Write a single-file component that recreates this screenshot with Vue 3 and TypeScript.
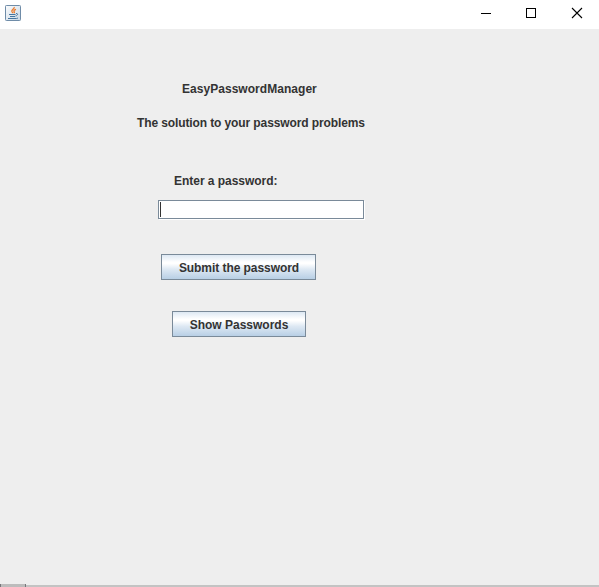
<script setup lang="ts">
import { ref } from 'vue'

const password = ref('')
</script>

<template>
  <main class="window">
    <header class="titlebar">
      <svg class="java" width="16" height="16" viewBox="0 0 16 16">
        <defs>
          <linearGradient id="tile" x1="0" y1="0" x2="1" y2="1">
            <stop offset="0" stop-color="#fbfcfd" />
            <stop offset="1" stop-color="#c9d7e4" />
          </linearGradient>
        </defs>
        <rect x=".5" y=".5" width="15" height="15" rx=".8" fill="url(#tile)" stroke="#6f8ca8" />
        <path d="M9.2 2c.6 2-3.2 2.6-2.3 4.6.3.6.9.9.9 1.6M11 4.4c-1.8.6-2.6 1.4-1.8 2.3.4.5.3.9-.2 1.4" fill="none" stroke="#ea7a2c" stroke-width="1.3" />
        <path d="M4 9.5h6.5M5 11.5h5M3 13.5h8.5l1.5-.5M11 8.5c2.5-.3 1.9 2-.5 2.6" fill="none" stroke="#46759f" stroke-width="1" />
      </svg>
      <div class="controls">
        <svg width="46" height="29" viewBox="0 0 46 29" shape-rendering="crispEdges"><path d="M18 13.5h10" stroke="#000" /></svg>
        <svg width="45" height="29" viewBox="0 0 45 29" shape-rendering="crispEdges"><rect x="17.5" y="8.5" width="9" height="9" fill="none" stroke="#000" /></svg>
        <svg width="46" height="29" viewBox="0 0 46 29"><path d="M18 8l10 10M28 8l-10 10" stroke="#000" stroke-width="1.1" /></svg>
      </div>
    </header>
    <section class="content">
      <h1 class="label name">EasyPasswordManager</h1>
      <p class="label tagline">The solution to your password problems</p>
      <label class="label prompt" for="password">Enter a password:</label>
      <div class="field">
        <span class="caret"></span>
        <input id="password" v-model="password" type="text" />
      </div>
      <button class="submit"><span>Submit the password</span></button>
      <button class="show"><span>Show Passwords</span></button>
    </section>
    <footer class="edge"><span class="tab"></span><span class="rest"></span></footer>
  </main>
</template>

<style>
body {
  overflow: hidden;
}
</style>

<style scoped>
.window {
  display: flex;
  flex-direction: column;
  width: 599px;
  height: 587px;
  background: #eee;
  color: #333;
  font: bold 12px/16px "Liberation Sans", Arial, sans-serif;
}
.titlebar {
  display: flex;
  justify-content: space-between;
  height: 29px;
  padding-left: 5px;
  background: #fff;
}
.java {
  margin-top: 5px;
}
.controls {
  display: flex;
  width: 136px;
}
.controls svg {
  flex: none;
}
.content {
  display: flex;
  flex: 1;
  flex-direction: column;
  align-items: flex-start;
  padding-top: 52px;
}
.label {
  margin: 0;
  font: inherit;
  white-space: nowrap;
}
.name {
  margin-left: 182px;
  letter-spacing: 0.04px;
}
.tagline {
  margin: 18px 0 0 137px;
  letter-spacing: -0.11px;
}
.prompt {
  margin: 42px 0 0 174px;
  letter-spacing: -0.03px;
}
.field {
  display: flex;
  box-sizing: border-box;
  width: 206px;
  height: 19px;
  margin: 11px 0 0 158px;
  padding: 1px;
  border: 1px solid #7a8a99;
  background: #fff;
  box-shadow: 1px 1px #fff;
}
.caret {
  width: 1px;
  height: 15px;
  background: #333;
}
input {
  flex: 1;
  min-width: 0;
  padding: 0;
  border: 0;
  outline: 0;
  background: transparent;
  font: inherit;
}
button {
  box-sizing: border-box;
  height: 26px;
  padding: 2px 0 0;
  border: 1px solid #7a8a99;
  background: linear-gradient(#dde8f3 0, #fff 30%, #fff 36%, #dde8f3 60%, #b8cfe5 100%);
  color: #333;
  font: inherit;
  text-align: center;
  white-space: nowrap;
}
.submit {
  width: 155px;
  margin: 35px 0 0 161px;
  padding-left: 1px;
  letter-spacing: -0.06px;
}
.show {
  width: 134px;
  margin: 31px 0 0 172px;
}
.edge {
  display: flex;
  align-items: flex-end;
  height: 3px;
}
.tab {
  box-sizing: border-box;
  width: 26px;
  height: 3px;
  border: 1px solid #77777b;
  border-width: 0 1px;
  background: #bcbcbc;
}
.rest {
  flex: 1;
  height: 2px;
  background: #c3c3c3;
}
</style>
